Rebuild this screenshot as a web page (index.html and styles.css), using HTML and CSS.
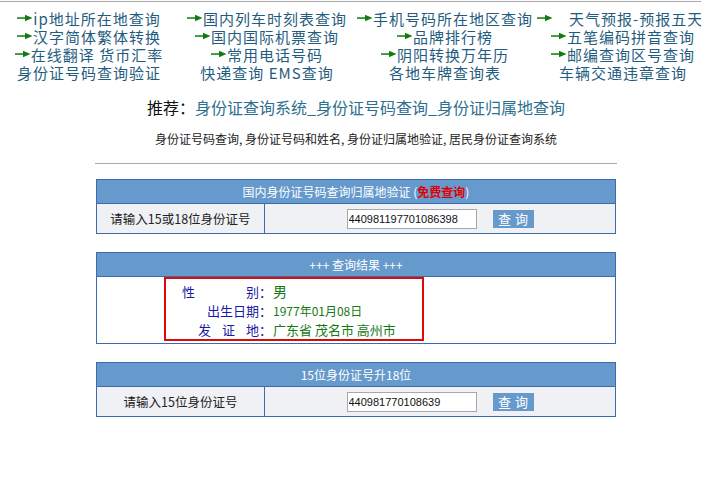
FILE: index.html
```html
<!DOCTYPE html>
<html lang="zh-CN">
<head>
<meta charset="utf-8">
<title>身份证号码查询</title>
<link rel="stylesheet" href="styles.css">
</head>
<body>
<div class="page">
  <div class="topline"></div>
  <div class="links">
    <div class="lc"><svg class="arr" viewBox="0 0 16 10"><rect x="0" y="4.3" width="10" height="1.5"/><polygon points="8,1.8 15.5,5 8,8.2"/></svg>ip地址所在地查询</div>
    <div class="lc"><svg class="arr" viewBox="0 0 16 10"><rect x="0" y="4.3" width="10" height="1.5"/><polygon points="8,1.8 15.5,5 8,8.2"/></svg>国内列车时刻表查询</div>
    <div class="lc"><svg class="arr" viewBox="0 0 16 10"><rect x="0" y="4.3" width="10" height="1.5"/><polygon points="8,1.8 15.5,5 8,8.2"/></svg>手机号码所在地区查询</div>
    <div class="lc lc-left"><svg class="arr arr-wide" viewBox="0 0 16 10"><rect x="0" y="4.3" width="10" height="1.5"/><polygon points="8,1.8 15.5,5 8,8.2"/></svg>天气预报-预报五天</div>

    <div class="lc"><svg class="arr" viewBox="0 0 16 10"><rect x="0" y="4.3" width="10" height="1.5"/><polygon points="8,1.8 15.5,5 8,8.2"/></svg>汉字简体繁体转换</div>
    <div class="lc"><svg class="arr" viewBox="0 0 16 10"><rect x="0" y="4.3" width="10" height="1.5"/><polygon points="8,1.8 15.5,5 8,8.2"/></svg>国内国际机票查询</div>
    <div class="lc"><svg class="arr" viewBox="0 0 16 10"><rect x="0" y="4.3" width="10" height="1.5"/><polygon points="8,1.8 15.5,5 8,8.2"/></svg>品牌排行榜</div>
    <div class="lc"><svg class="arr" viewBox="0 0 16 10"><rect x="0" y="4.3" width="10" height="1.5"/><polygon points="8,1.8 15.5,5 8,8.2"/></svg>五笔编码拼音查询</div>

    <div class="lc"><svg class="arr" viewBox="0 0 16 10"><rect x="0" y="4.3" width="10" height="1.5"/><polygon points="8,1.8 15.5,5 8,8.2"/></svg>在线翻译 货币汇率</div>
    <div class="lc"><svg class="arr" viewBox="0 0 16 10"><rect x="0" y="4.3" width="10" height="1.5"/><polygon points="8,1.8 15.5,5 8,8.2"/></svg>常用电话号码</div>
    <div class="lc"><svg class="arr" viewBox="0 0 16 10"><rect x="0" y="4.3" width="10" height="1.5"/><polygon points="8,1.8 15.5,5 8,8.2"/></svg>阴阳转换万年历</div>
    <div class="lc"><svg class="arr" viewBox="0 0 16 10"><rect x="0" y="4.3" width="10" height="1.5"/><polygon points="8,1.8 15.5,5 8,8.2"/></svg>邮编查询区号查询</div>

    <div class="lc">身份证号码查询验证</div>
    <div class="lc">快递查询 EMS查询</div>
    <div class="lc">各地车牌查询表</div>
    <div class="lc">车辆交通违章查询</div>
  </div>

  <p class="rec">推荐：<a class="rec-link" href="#">身份证查询系统_身份证号码查询_身份证归属地查询</a></p>
  <p class="sub">身份证号码查询, 身份证号码和姓名, 身份证归属地验证, 居民身份证查询系统</p>
  <hr class="rule">

  <div class="box">
    <div class="box-head">国内身份证号码查询归属地验证 (<span class="free">免费查询</span>)</div>
    <div class="box-row">
      <div class="cell-l">请输入15或18位身份证号</div>
      <div class="cell-r"><input class="idin" type="text" value="440981197701086398"><button class="btn">查询</button></div>
    </div>
  </div>

  <div class="box">
    <div class="box-head">+++ 查询结果 +++</div>
    <div class="box-body">
      <div class="result">
        <div class="lb"><span class="sp-wide">性</span>别：</div><div class="val val-big">男</div>
        <div class="lb">出生日期：</div><div class="val val-small">1977年01月08日</div>
        <div class="lb"><span class="sp-mid">发证</span>地：</div><div class="val">广东省 茂名市 高州市</div>
      </div>
    </div>
  </div>

  <div class="box">
    <div class="box-head">15位身份证号升18位</div>
    <div class="box-row">
      <div class="cell-l">请输入15位身份证号</div>
      <div class="cell-r"><input class="idin" type="text" value="440981770108639"><button class="btn">查询</button></div>
    </div>
  </div>
</div>
</body>
</html>
```

FILE: styles.css
```css
html, body {
  margin: 0;
  padding: 0;
  background: #ffffff;
  overflow: hidden;
}
body {
  font-family: "Noto Sans CJK SC", "Noto Sans", sans-serif;
  color: #222222;
}
.page {
  width: 712px;
}
.topline {
  height: 1px;
  margin-top: 1px;
  background: #a9a9a9;
}
.links {
  display: grid;
  grid-template-columns: repeat(4, 178px);
  padding-top: 8px;
  font-size: 15px;
  letter-spacing: 1px;
  line-height: 18px;
  color: #1f5d80;
}
.lc {
  text-align: center;
  white-space: nowrap;
}
.lc-left {
  text-align: left;
  padding-left: 3px;
}
.arr {
  width: 16px;
  height: 10px;
  fill: #117a11;
  vertical-align: 2px;
}
.arr-wide {
  margin-right: 16px;
}
.rec {
  margin: 15px 0 0;
  font-size: 16px;
  line-height: 20px;
  text-align: center;
  color: #111111;
}
.rec-link {
  color: #2d6f8f;
  text-decoration: none;
}
.sub {
  margin: 14px 0 0;
  font-size: 12px;
  line-height: 16px;
  text-align: center;
  color: #222222;
}
.rule {
  width: 522px;
  margin: 16px auto 0;
  border: 0;
  border-top: 1px solid #a8a8a8;
  height: 0;
}
.box {
  width: 520px;
  box-sizing: border-box;
  margin: 15px auto 0;
  border: 1px solid #3a6cae;
}
.box + .box {
  margin-top: 18px;
}
.box-head {
  height: 23px;
  line-height: 23px;
  background: #6699cc;
  color: #ffffff;
  font-size: 12px;
  text-align: center;
  border-bottom: 1px solid #3a6cae;
}
.free {
  color: #e00000;
  font-weight: bold;
}
.box-row {
  display: grid;
  grid-template-columns: 168px 1fr;
  height: 29px;
  background: #eff1f5;
}
.cell-l {
  border-right: 1px solid #3a6cae;
  font-size: 12.5px;
  line-height: 29px;
  text-align: center;
  color: #222222;
}
.cell-r {
  display: flex;
  align-items: center;
  justify-content: center;
  gap: 16px;
}
.idin {
  width: 130px;
  height: 20px;
  box-sizing: border-box;
  border: 1px solid #a5a9ad;
  padding: 0 1px;
  font-family: "Liberation Sans", Arial, sans-serif;
  font-size: 11px;
  color: #111111;
  background: #ffffff;
}
.btn {
  width: 41px;
  height: 18px;
  border: 0;
  padding: 0 0 0 4px;
  background: #6699cc;
  color: #ffffff;
  font-family: "Noto Sans CJK SC", sans-serif;
  font-size: 13px;
  line-height: 18px;
  letter-spacing: 4px;
}
.box-body {
  height: 66px;
  background: #ffffff;
}
.result {
  width: 260px;
  height: 64px;
  box-sizing: border-box;
  margin-left: 67px;
  border: 2px solid #dd0a0a;
  padding-top: 3px;
  display: grid;
  grid-template-columns: 106px 1fr;
  grid-auto-rows: 19px;
  font-size: 13px;
  line-height: 19px;
}
.lb {
  text-align: right;
  color: #1a1aa6;
  white-space: nowrap;
}
.sp-wide {
  margin-right: 51px;
}
.sp-mid {
  letter-spacing: 11px;
}
.val {
  color: #157a15;
  white-space: nowrap;
  padding-left: 1px;
}
.val-big {
  font-size: 14px;
}
.val-small {
  font-size: 12px;
}
```
